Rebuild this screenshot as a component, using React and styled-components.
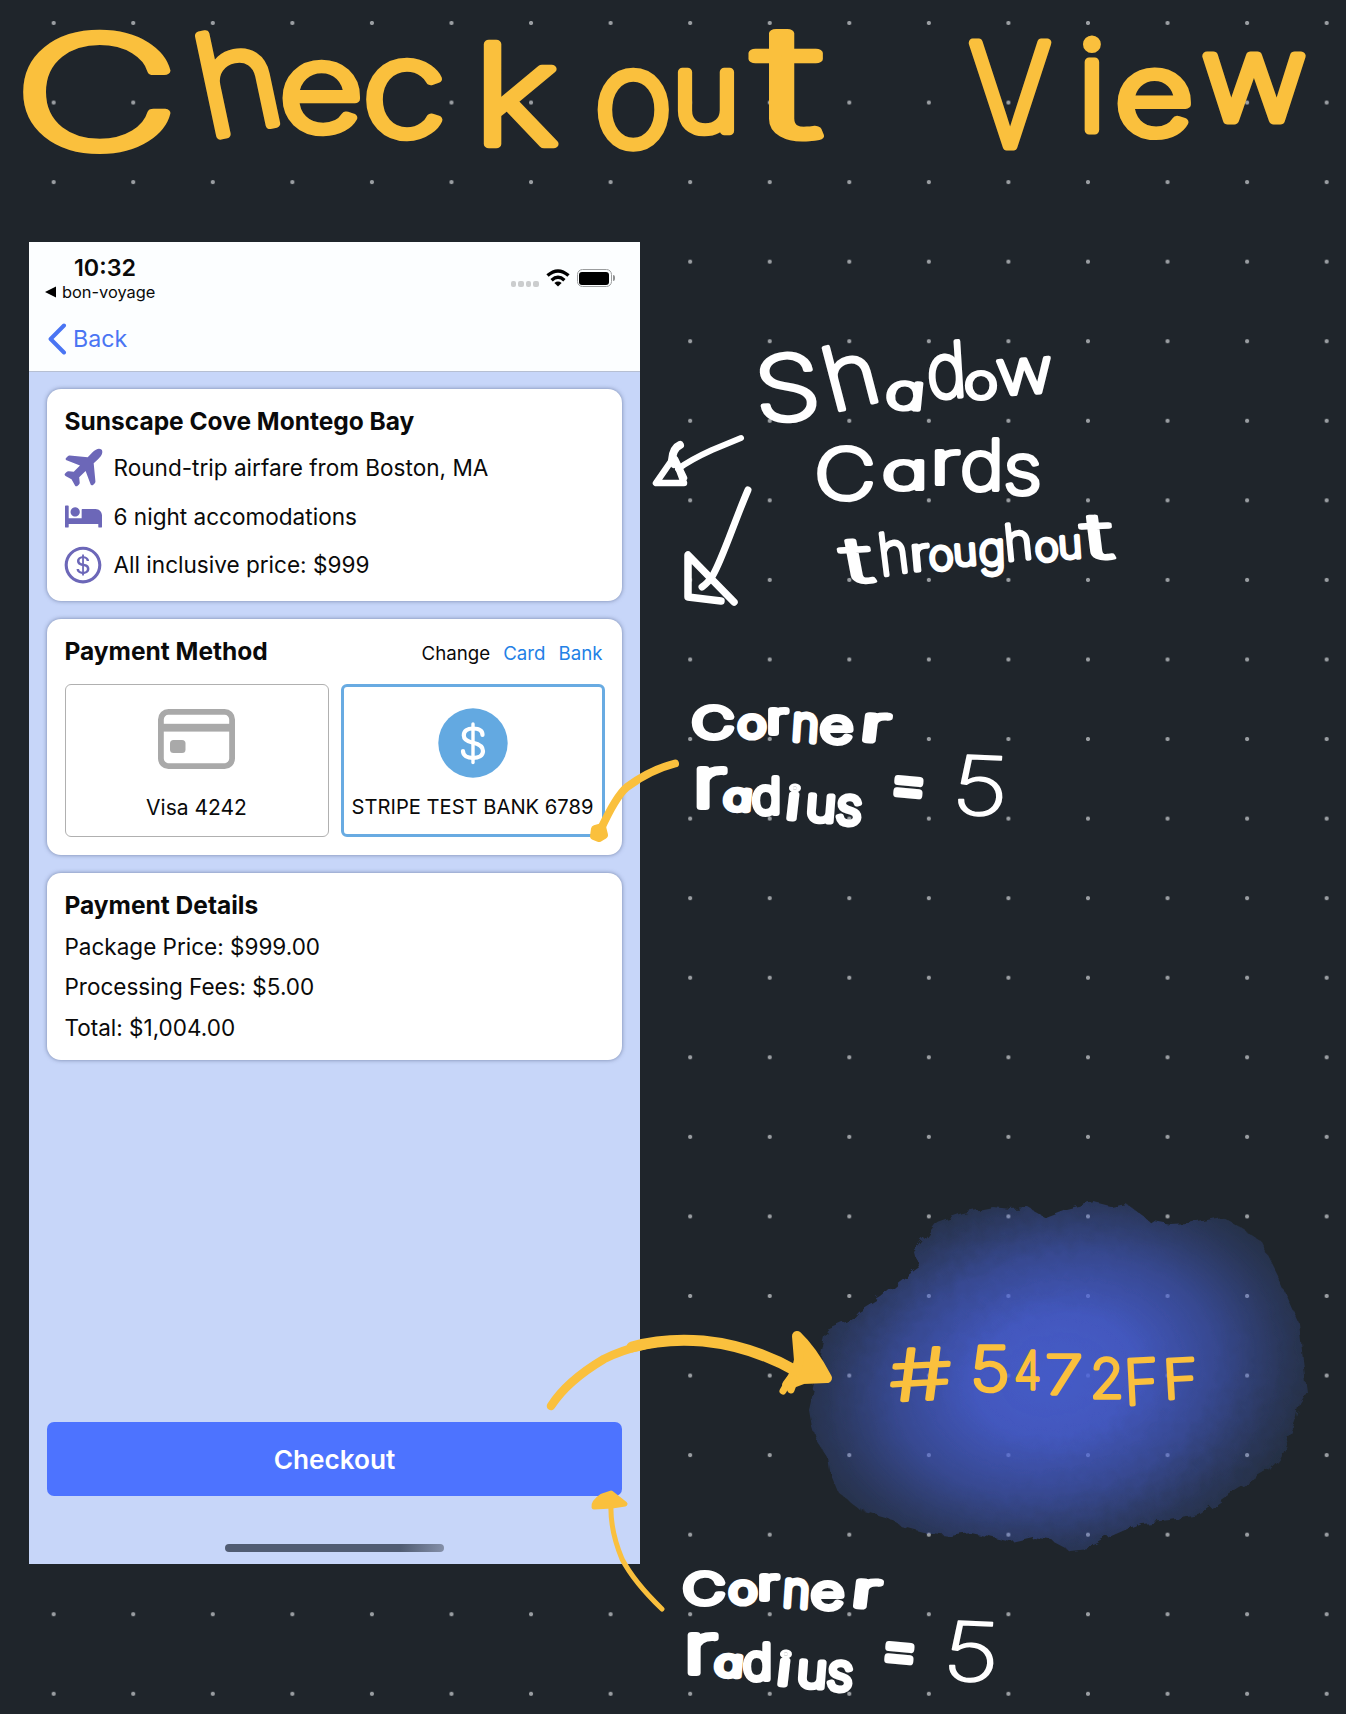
import React from "react";
import styled, { createGlobalStyle, css } from "styled-components";
import { IoAirplane } from "react-icons/io5";
import { FaBed } from "react-icons/fa";
import { AiOutlineDollarCircle } from "react-icons/ai";

const YELLOW = "#fac03d";
const WHITE = "#ffffff";

const GlobalStyle = createGlobalStyle`
  body { margin: 0; background: #1f252b; }
  * { box-sizing: border-box; }
`;

const Board = styled.main`
  position: relative;
  width: 1346px;
  height: 1714px;
  overflow: hidden;
  padding: 242px 0 0 29px;
  background-color: #1f252b;
  background-image: radial-gradient(circle, #9a9ea2 1.6px, transparent 2.5px);
  background-size: 79.57px 79.57px;
  background-position: 13.9px -16.8px;
  font-family: Inter, "Liberation Sans", sans-serif;
`;

const Phone = styled.section`
  display: flex;
  flex-direction: column;
  width: 611px;
  height: 1322px;
  background: #c7d6f9;
  color: #0a0a0a;
`;

const TopBar = styled.header`
  height: 130px;
  background: #fcfeff;
  border-bottom: 1.5px solid #b6bfd2;
`;

const StatusBar = styled.div`
  display: flex;
  justify-content: space-between;
  padding: 13px 25px 0 16px;
`;

const Clock = styled.div`
  padding-left: 29px;
  font-size: 23.3px;
  font-weight: 600;
  line-height: 25px;
`;

const ReturnLink = styled.div`
  display: flex;
  align-items: center;
  gap: 6px;
  font-size: 16.4px;
  line-height: 24px;
`;

const StatusIcons = styled.div`
  display: flex;
  align-items: center;
  height: 20px;
  margin-top: 13px;
`;

const SignalDots = styled.div`
  display: flex;
  gap: 2px;
  margin: 12px 7px 0 0;
  span { width: 5.5px; height: 6px; border-radius: 2px; background: #cbcdce; }
`;

const Battery = styled.div`
  display: flex;
  align-items: center;
  margin-left: 7px;
  &::after {
    content: "";
    width: 2px;
    height: 6px;
    margin-left: 1.5px;
    border-radius: 0 2px 2px 0;
    background: #8f9192;
  }
`;

const BatteryShell = styled.div`
  width: 35px;
  height: 18px;
  padding: 1.5px;
  border: 1.5px solid #9b9d9e;
  border-radius: 5.5px;
  &::before {
    content: "";
    display: block;
    height: 100%;
    border-radius: 3px;
    background: #000;
  }
`;

const BackLink = styled.div`
  display: flex;
  align-items: center;
  gap: 6px;
  margin: 19px 0 0 19px;
  color: #4a75f3;
  font-size: 23.2px;
  line-height: 32px;
`;

const Content = styled.div`
  flex: 1;
  display: flex;
  flex-direction: column;
  gap: 18px;
  padding: 17px 18px 0;
`;

const Card = styled.article`
  height: ${(p) => p.$height}px;
  padding: 16px 17.5px 0;
  border-radius: 14px;
  background: #fff;
  box-shadow: 0 0 4px rgba(60, 75, 115, 0.6);
`;

const CardTitle = styled.h2`
  margin: 0 0 ${(p) => p.$gap || 0}px;
  font-size: 24.5px;
  font-weight: 700;
  line-height: 32px;
`;

const Feature = styled.div`
  display: flex;
  align-items: center;
  gap: 12px;
  height: 48.8px;
  font-size: 22.57px;
`;

const FeatureIcon = styled.span`
  flex: 0 0 37px;
  min-width: 0;
  height: 37px;
  display: flex;
  align-items: center;
  justify-content: center;
  color: #6c67b8;
  svg { flex: none; }
  ${(p) => p.$tilted && css`
    svg { transform: translate(2.3px, -2.3px) rotate(-45deg); }
  `}
`;

const MethodHeader = styled.div`
  display: flex;
  align-items: center;
  justify-content: space-between;
`;

const ChangeLinks = styled.div`
  display: flex;
  gap: 13px;
  padding: 5px 2px 0 0;
  font-size: 18.7px;
  line-height: 24px;
  color: #0a0a0a;
`;

const LinkText = styled.span`
  color: #2481e6;
`;

const Methods = styled.div`
  display: grid;
  grid-template-columns: 264px 264px;
  gap: 12px;
  margin-top: 17px;
`;

const Method = styled.div`
  display: flex;
  flex-direction: column;
  align-items: center;
  height: 153px;
  padding-top: ${(p) => (p.$selected ? 20.5 : 23.5)}px;
  border: ${(p) => (p.$selected ? "3px solid #68abe2" : "1.5px solid #b0b0b0")};
  border-radius: 6px;
  svg { flex: none; }
`;

const MethodLabel = styled.span`
  margin-top: auto;
  margin-bottom: ${(p) => p.$bottom}px;
  color: #0a0a0a;
  font-size: ${(p) => p.$size}px;
  line-height: 24px;
  white-space: nowrap;
`;

const DetailLine = styled.p`
  margin: 0;
  font-size: 22.5px;
  line-height: 40.4px;
`;

const CheckoutButton = styled.button`
  height: 74px;
  margin: 0 18px;
  padding: 0;
  border: 0;
  border-radius: 7px;
  background: #4d73ff;
  color: #fff;
  font: 600 26.2px Inter, "Liberation Sans", sans-serif;
`;

const HomeBar = styled.div`
  width: 219px;
  height: 8px;
  margin: 48px auto 12px;
  border-radius: 4px;
  background: linear-gradient(100deg, #505c72 80%, #8590a9 100%);
`;

const Notes = styled.svg`
  position: absolute;
  inset: 0;
  pointer-events: none;
`;

const Ink = styled.text`
  fill: ${(p) => p.$color};
  stroke: ${(p) => p.$color};
  stroke-width: ${(p) => p.$pen}px;
  stroke-linejoin: round;
  stroke-linecap: round;
  font-family: Inter, "Liberation Sans", sans-serif;
  font-weight: 200;
  font-feature-settings: "cv11";
`;

/* Each letter is [character, x, baseline, size, rotation, stretched width]. */
function Scribble({ letters, color = WHITE, pen = 6 }) {
  return (
    <Ink $color={color} $pen={pen}>
      {letters.map(([ch, x, y, size, turn = 0, width], i) => (
        <tspan
          key={i}
          x={x}
          y={y}
          fontSize={size}
          rotate={turn}
          textLength={width}
          lengthAdjust={width ? "spacingAndGlyphs" : undefined}
        >
          {ch}
        </tspan>
      ))}
    </Ink>
  );
}

const Stroke = styled.path`
  fill: ${(p) => (p.$solid ? p.$color : "none")};
  stroke: ${(p) => p.$color};
  stroke-width: ${(p) => p.$pen}px;
  stroke-linecap: round;
  stroke-linejoin: round;
`;

const words = {
  checkout: [["C", 14, 148, 155, 0, 165], ["h", 208, 138, 140, -12], ["e", 279, 131, 122, 0, 84], ["c", 362, 136, 134, 0, 84], ["k", 474, 144, 138, 0, 84], ["o", 594, 146, 134], ["u", 672, 131, 108, 0, 68], ["t", 754, 136, 152, 0, 68]],
  view: [["V", 969, 146, 142, 0, 82], ["i", 1078, 130, 124], ["e", 1115, 134, 112, 0, 78], ["w", 1202, 120, 118, 0, 104]],
  shadow: [["S", 757, 422, 90, -4, 66], ["h", 832, 412, 88, -14, 54], ["a", 884, 408, 48, 4, 40], ["d", 928, 399, 76, -4, 40], ["o", 964, 398, 48, 0, 34], ["w", 998, 395, 62, -4, 56]],
  cards: [["C", 814, 499, 70, 0, 62], ["a", 882, 489, 50, 0, 46], ["r", 930, 484, 60, 0, 30], ["d", 960, 490, 70, 0, 44], ["s", 1003, 494, 72, 0, 39]],
  throughout: [["t", 846, 583, 62, -6, 30], ["h", 881, 576, 58, -8, 30], ["r", 911, 571, 46, -4, 20], ["o", 930, 571, 42, -6, 25], ["u", 954, 566, 38, -4, 24], ["g", 979, 566, 46, -2, 27], ["h", 1006, 561, 50, -6, 28], ["o", 1036, 562, 40, -6, 24], ["u", 1059, 559, 40, -4, 24], ["t", 1085, 559, 62, -4, 30]],
  corner: [["C", 692, 738, 42, 0, 42], ["o", 738, 737, 38, 0, 28], ["r", 767, 733, 42, 0, 20], ["n", 791, 740, 48, 4, 27], ["e", 820, 742, 46, 0, 33], ["r", 860, 740, 46, 4, 27]],
  radius: [["r", 692, 807, 70, 0, 34], ["a", 723, 809, 36, 4, 28], ["d", 752, 813, 48, 0, 29], ["i", 785, 818, 44, 5, 13], ["u", 805, 820, 46, 4, 30], ["s", 835, 823, 50, 4, 26]],
  hex: [["#", 892, 1401, 70, -4, 62], ["5", 970, 1391, 62, 0, 40], ["4", 1014, 1389, 52, 0, 27], ["7", 1045, 1394, 54, 0, 38], ["2", 1090, 1398, 54, 0, 34], ["F", 1125, 1405, 62, -3, 35], ["F", 1164, 1399, 54, -3, 35]],
};

const glowShape =
  "M827 1330 L850 1320 L858 1311 L881 1297 L900 1281 L918 1268 L914 1252 L925 1238 L937 1222 L962 1213 L993 1207 L1010 1209 L1029 1208 L1045 1217 L1066 1209 L1094 1202 L1110 1206 L1125 1203 L1148 1220 L1170 1224 L1188 1223 L1220 1216 L1238 1226 L1260 1240 L1269 1258 L1280 1280 L1290 1303 L1299 1323 L1303 1360 L1307 1392 L1300 1403 L1296 1423 L1280 1457 L1270 1470 L1253 1480 L1225 1497 L1199 1515 L1170 1520 L1141 1523 L1109 1537 L1088 1548 L1069 1550 L1050 1540 L1033 1537 L1011 1542 L990 1537 L971 1533 L950 1536 L924 1533 L905 1528 L888 1518 L860 1510 L838 1492 L829 1470 L827 1457 L816 1440 L812 1427 L809 1410 L816 1380 L822 1350 Z";

function CornerNote() {
  return (
    <g>
      <Scribble letters={words.corner} pen={6} />
      <Scribble letters={words.radius} pen={6} />
      <Scribble letters={[["=", 888, 803, 62, 5, 38]]} pen={7.5} />
      <Scribble letters={[["5", 950, 814, 82, 3, 57]]} pen={1.5} />
    </g>
  );
}

function Annotations() {
  return (
    <Notes width="1346" height="1714" viewBox="0 0 1346 1714">
      <defs>
        <radialGradient id="glow" gradientUnits="userSpaceOnUse" cx="0" cy="0" r="1" gradientTransform="translate(1055 1375) rotate(-12) scale(270 198)">
          <stop offset="0" stopColor="#4a62dc" stopOpacity=".88" />
          <stop offset=".3" stopColor="#4a62dc" stopOpacity=".83" />
          <stop offset=".6" stopColor="#4760d4" stopOpacity=".6" />
          <stop offset=".85" stopColor="#4460c8" stopOpacity=".3" />
          <stop offset="1" stopColor="#4064c0" stopOpacity=".16" />
        </radialGradient>
        <filter id="ragged">
          <feTurbulence type="fractalNoise" baseFrequency=".09" numOctaves="2" seed="4" />
          <feDisplacementMap in="SourceGraphic" scale="10" />
        </filter>
      </defs>
      <path d={glowShape} fill="url(#glow)" filter="url(#ragged)" />

      <Scribble letters={words.checkout} color={YELLOW} pen={8.5} />
      <Scribble letters={words.view} color={YELLOW} pen={9} />

      <Scribble letters={words.shadow} pen={4.2} />
      <Scribble letters={words.cards} pen={4.2} />
      <Scribble letters={words.throughout} pen={4} />

      <Stroke $color={WHITE} $pen={6} d="M741 438 L712 450 Q690 460 678 469" />
      <Stroke $color={WHITE} $pen={8} d="M680 445 Q673 448 672 460 L674 464" />
      <Stroke $color={WHITE} $pen={6.5} d="M672 460 L656 483 H684 L675 459 L684 478" />
      <Stroke $color={WHITE} $pen={7} d="M748 490 C735 520 722 560 713 575 Q708 583 702 587" />
      <Stroke $color={WHITE} $pen={7.5} d="M734 602 L688 555 V597 L721 601" />

      <CornerNote />
      <g transform="translate(-9 866)"><CornerNote /></g>

      <Stroke $color={YELLOW} $pen={8} d="M675 763.5 Q650 770 627 787 Q616 796 600 831" />
      <Stroke $color={YELLOW} $pen={8} $solid d="M595 829 L602 827 L604 835 L599 838 L594 836 Z" />

      <Stroke $color={YELLOW} $pen={8.5} d="M551 1406 Q567 1381 604 1359 Q640 1341 690 1340" />
      <Stroke $color={YELLOW} $pen={11} d="M632 1347 Q664 1338 703 1341 Q752 1346 796 1371" />
      <Stroke $color={YELLOW} $pen={10} $solid d="M797 1336 Q812 1350 827 1378 L803 1379 L787 1385 Q797 1373 799 1360 Z" />
      <Stroke $color={YELLOW} $pen={7} d="M790 1379 L783 1391 M795 1379 L791 1390" />

      <Stroke $color={YELLOW} $pen={5} d="M662 1609 Q634 1582 622 1559 Q610 1530 611 1505" />
      <Stroke $color={YELLOW} $pen={5} $solid d="M611 1493 L625 1504 L612 1506 L594 1507 Q593 1502 602 1496 Z" />

      <Scribble letters={words.hex} color={YELLOW} pen={3.5} />
    </Notes>
  );
}

function WifiIcon() {
  return (
    <svg width="24" height="18" viewBox="0 0 24 18" fill="none" stroke="#000" strokeWidth="3.4">
      <path d="M1.5 6.6 Q12 -2.8 22.5 6.6" />
      <path d="M5.6 11.2 Q12 5.4 18.4 11.2" />
      <path d="M12 17.5 L8.4 13.9 Q12 11 15.6 13.9 Z" fill="#000" stroke="none" />
    </svg>
  );
}

function CreditCardIcon() {
  return (
    <svg width="77" height="60" viewBox="0 0 77 60">
      <rect x="2.9" y="2.9" width="71.2" height="54.2" rx="7.5" fill="none" stroke="#a9a9a9" strokeWidth="5.8" />
      <rect x="3" y="14.8" width="71" height="7.8" fill="#a9a9a9" />
      <rect x="12" y="31" width="15.5" height="13" rx="3.5" fill="#a9a9a9" />
    </svg>
  );
}

function DollarBadge() {
  return (
    <svg width="70" height="70" viewBox="0 0 70 70" fill="none" stroke="#fff" strokeWidth="4.2" strokeLinecap="round">
      <circle cx="35" cy="35" r="34.7" fill="#63a9e1" stroke="none" />
      <path d="M35 16 V54.5" strokeWidth="3.4" />
      <path d="M44.5 27 C44.5 22.5 40.5 20.5 35 20.5 C29.5 20.5 25.8 23 25.8 27.5 C25.8 32 30 33.7 35 34.8 C40.5 36 45 37.8 45 43 C45 47.8 40.5 50 35 50 C29.5 50 25 47.5 25 43" />
    </svg>
  );
}

export default function App() {
  return (
    <Board>
      <GlobalStyle />
      <Phone>
        <TopBar>
          <StatusBar>
            <div>
              <Clock>10:32</Clock>
              <ReturnLink>
                <svg width="11" height="12" viewBox="0 0 11 12"><path d="M0 6 L11 0.5 V11.5 Z" /></svg>
                bon-voyage
              </ReturnLink>
            </div>
            <StatusIcons>
              <SignalDots><span /><span /><span /><span /></SignalDots>
              <WifiIcon />
              <Battery><BatteryShell /></Battery>
            </StatusIcons>
          </StatusBar>
          <BackLink>
            <svg width="19" height="32" viewBox="0 0 19 32" fill="none" stroke="#4a75f3" strokeWidth="4" strokeLinecap="round" strokeLinejoin="round">
              <path d="M16 2.5 L2.6 16 L16 29.5" />
            </svg>
            Back
          </BackLink>
        </TopBar>

        <Content>
          <Card $height={212}>
            <CardTitle $gap={6}>Sunscape Cove Montego Bay</CardTitle>
            <Feature>
              <FeatureIcon $tilted><IoAirplane size={47} /></FeatureIcon>
              Round-trip airfare from Boston, MA
            </Feature>
            <Feature>
              <FeatureIcon><FaBed size={37} /></FeatureIcon>
              6 night accomodations
            </Feature>
            <Feature>
              <FeatureIcon><AiOutlineDollarCircle size={42} /></FeatureIcon>
              All inclusive price: $999
            </Feature>
          </Card>

          <Card $height={236}>
            <MethodHeader>
              <CardTitle>Payment Method</CardTitle>
              <ChangeLinks>
                <span>Change</span>
                <LinkText>Card</LinkText>
                <LinkText>Bank</LinkText>
              </ChangeLinks>
            </MethodHeader>
            <Methods>
              <Method>
                <CreditCardIcon />
                <MethodLabel $size={21} $bottom={16.5}>Visa 4242</MethodLabel>
              </Method>
              <Method $selected>
                <DollarBadge />
                <MethodLabel $size={20.17} $bottom={15}>STRIPE TEST BANK 6789</MethodLabel>
              </Method>
            </Methods>
          </Card>

          <Card $height={187}>
            <CardTitle $gap={6}>Payment Details</CardTitle>
            <DetailLine>Package Price: $999.00</DetailLine>
            <DetailLine>Processing Fees: $5.00</DetailLine>
            <DetailLine>Total: $1,004.00</DetailLine>
          </Card>
        </Content>

        <CheckoutButton>Checkout</CheckoutButton>
        <HomeBar />
      </Phone>
      <Annotations />
    </Board>
  );
}
